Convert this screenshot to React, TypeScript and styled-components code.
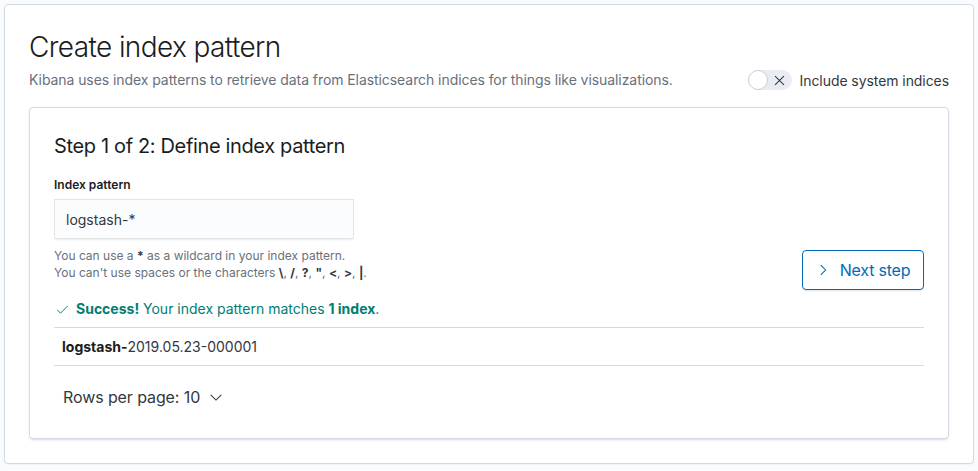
import React from "react";
import styled, {createGlobalStyle} from "styled-components";

const GlobalStyle = createGlobalStyle`
	* {
		box-sizing: border-box;
	}
	body {
		margin: 0;
		background: #fafbfd;
		font-family: Inter, "Noto Sans", "Liberation Sans", sans-serif;
		color: #343741;
	}
`;

const Page = styled.div`
	padding: 4px;
	width: 978px;
`;

const Panel = styled.div<{$inner?: boolean}>`
	background: #fff;
	border: 1px solid #d3dae6;
	border-radius: 4px;
	padding: 24px;
	box-shadow: ${(p) =>
		p.$inner
			? "0 2px 2px -1px rgba(152,162,179,.3), 0 1px 5px -2px rgba(152,162,179,.3)"
			: "0 1px 2px -1px rgba(152,162,179,.25)"};
`;

const Title = styled.h1`
	margin: 0;
	font-size: 28px;
	line-height: 36px;
	font-weight: 300;
	color: #1a1c21;
	letter-spacing: -0.6px;
`;

const SubRow = styled.div`
	display: flex;
	align-items: center;
	justify-content: space-between;
	margin: 5px 0 17px;
	height: 20px;
`;

const Subtitle = styled.p`
	margin: 0;
	font-size: 14px;
	line-height: 20px;
	color: #69707d;
	letter-spacing: -0.07px;
`;

const SwitchWrap = styled.label`
	display: flex;
	align-items: center;
	gap: 8px;
	font-size: 14px;
	color: #343741;
	letter-spacing: -0.07px;
`;

const Track = styled.span`
	position: relative;
	display: inline-flex;
	align-items: center;
	justify-content: flex-end;
	width: 44px;
	height: 20px;
	border-radius: 10px;
	background: #e9edf3;
	padding-right: 6px;
`;

const Knob = styled.span`
	position: absolute;
	left: 0;
	top: 0;
	width: 20px;
	height: 20px;
	border-radius: 50%;
	background: #fff;
	border: 1px solid #c9cfd8;
`;

const StepTitle = styled.h2`
	margin: 0 0 16px;
	font-size: 20px;
	line-height: 28px;
	font-weight: 400;
	color: #1a1c21;
	letter-spacing: -0.35px;
`;

const FormRow = styled.div`
	display: flex;
	justify-content: space-between;
	align-items: flex-end;
`;

const Field = styled.div`
	display: flex;
	flex-direction: column;
	margin-bottom: 9px;
`;

const Label = styled.label`
	font-size: 12px;
	line-height: 18px;
	font-weight: 600;
	color: #1a1c21;
	margin-bottom: 5px;
`;

const Input = styled.div`
	width: 300px;
	height: 40px;
	padding: 0 12px;
	display: flex;
	align-items: center;
	background: #fbfcfd;
	font-size: 14px;
	color: #343741;
	box-shadow: 0 1px 1px -1px rgba(152, 162, 179, 0.2),
		0 3px 2px -2px rgba(152, 162, 179, 0.2),
		inset 0 0 0 1px rgba(16, 22, 26, 0.1);
`;

const Help = styled.div`
	margin-top: 8px;
	font-size: 12px;
	line-height: 17px;
	color: #69707d;

	strong {
		color: #343741;
		font-weight: 700;
	}
`;

const Button = styled.button`
	display: flex;
	align-items: center;
	justify-content: center;
	gap: 10px;
	height: 40px;
	width: 122px;
	padding: 0 12px;
	border: 1px solid #006bb4;
	border-radius: 4px;
	background: #fff;
	color: #006bb4;
	font-family: inherit;
	font-size: 16px;
	white-space: nowrap;
	letter-spacing: -0.2px;
	box-shadow: 0 2px 2px -1px rgba(152, 162, 179, 0.3);
`;

const Success = styled.div`
	display: flex;
	align-items: center;
	gap: 7px;
	margin: 9px 0 8px;
	padding-left: 2px;
	font-size: 14px;
	line-height: 20px;
	color: #017d73;

	strong {
		font-weight: 700;
	}
`;

const Table = styled.div`
	border-top: 1px solid #d3dae6;
	border-bottom: 1px solid #d3dae6;
`;

const Cell = styled.div`
	padding: 8px;
	font-size: 14px;
	line-height: 21px;
	color: #343741;

	strong {
		color: #1a1c21;
		font-weight: 700;
	}
`;

const Pager = styled.div`
	display: flex;
	align-items: center;
	gap: 9px;
	height: 34px;
	margin-top: 14px;
	padding-left: 9px;
	font-size: 16px;
	color: #343741;
	letter-spacing: -0.1px;
`;

const Chevron: React.FC<{dir: "right" | "down"; size?: number}> = ({dir, size = 14}) => (
	<svg width={size} height={size} viewBox="0 0 16 16" fill="none" stroke="currentColor" strokeWidth="1.2">
		{dir === "right" ? <path d="M5.5 2.5l5.5 5.5-5.5 5.5" /> : <path d="M2 5.5l6 6 6-6" />}
	</svg>
);

export default function App() {
	return (
		<>
			<GlobalStyle />
			<Page>
				<Panel>
					<Title>Create index pattern</Title>
					<SubRow>
						<Subtitle>
							Kibana uses index patterns to retrieve data from Elasticsearch indices for things like
							visualizations.
						</Subtitle>
						<SwitchWrap>
							<Track>
								<Knob />
								<svg width="13" height="13" viewBox="0 0 16 16" stroke="#343741" strokeWidth="1.3">
									<path d="M2.5 2.5l11 11M13.5 2.5l-11 11" />
								</svg>
							</Track>
							Include system indices
						</SwitchWrap>
					</SubRow>
					<Panel $inner>
						<StepTitle>Step 1 of 2: Define index pattern</StepTitle>
						<FormRow>
							<Field>
								<Label>Index pattern</Label>
								<Input>logstash-*</Input>
								<Help>
									You can use a <strong>*</strong> as a wildcard in your index pattern.
									<br />
									You can't use spaces or the characters <strong>\</strong>, <strong>/</strong>,{" "}
									<strong>?</strong>, <strong>"</strong>, <strong>&lt;</strong>,{" "}
									<strong>&gt;</strong>, <strong>|</strong>.
								</Help>
							</Field>
							<Button>
								<Chevron dir="right" />
								Next step
							</Button>
						</FormRow>
						<Success>
							<svg width="13" height="13" viewBox="0 0 16 16" fill="none" stroke="#017d73" strokeWidth="1.2">
								<path d="M1.5 8.5l4 4 9-9" />
							</svg>
							<span>
								<strong>Success!</strong> Your index pattern matches <strong>1 index</strong>.
							</span>
						</Success>
						<Table>
							<Cell>
								<strong>logstash-</strong>2019.05.23-000001
							</Cell>
						</Table>
						<Pager>
							Rows per page: 10
							<Chevron dir="down" />
						</Pager>
					</Panel>
				</Panel>
			</Page>
		</>
	);
}
